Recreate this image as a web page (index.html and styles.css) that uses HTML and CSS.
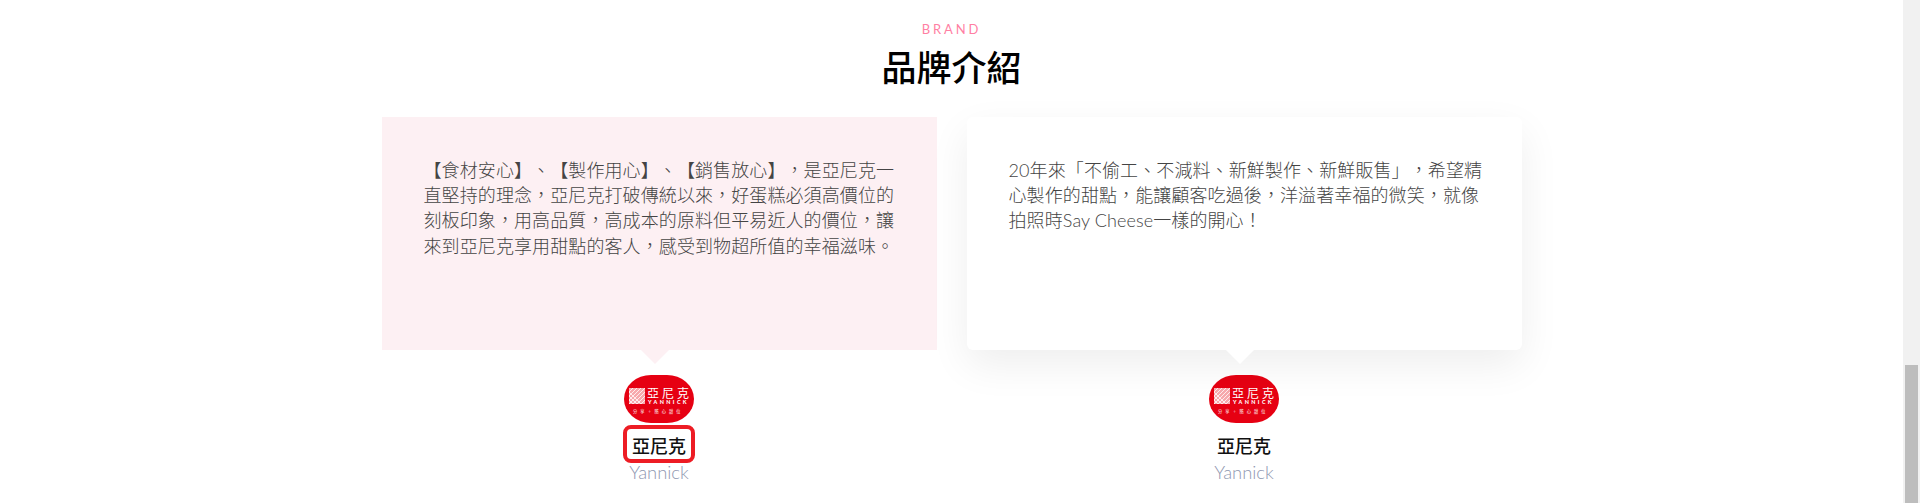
FILE: index.html
```html
<!DOCTYPE html>
<html lang="zh-Hant">
<head>
<meta charset="utf-8">
<title>品牌介紹</title>
<link rel="stylesheet" href="styles.css">
</head>
<body>
<div class="page">
  <main class="brand">
    <header class="brand-head">
      <p class="brand-eyebrow">BRAND</p>
      <h2 class="brand-title">品牌介紹</h2>
    </header>
    <div class="brand-grid">
      <article class="quote">
        <div class="bubble bubble-pink">
          <p class="bubble-text">【食材安心】、【製作用心】、【銷售放心】，是亞尼克一直堅持的理念，亞尼克打破傳統以來，好蛋糕必須高價位的刻板印象，用高品質，高成本的原料但平易近人的價位，讓來到亞尼克享用甜點的客人，感受到物超所值的幸福滋味。</p>
        </div>
        <svg class="logo" viewBox="0 0 70 48" aria-label="亞尼克">
          <rect class="logo-bg" width="70" height="48" rx="27" ry="24"/>
          <rect class="logo-square" x="5" y="13" width="16" height="16"/>
          <path class="logo-hatch" d="M5 17l4-4M5 21l8-8M5 25l12-12M5 29l16-16M9 29l12-12M13 29l8-8M17 29l4-4M5 25l4 4M5 21l8 8M5 17l12 12"/>
          <text class="logo-cn" x="23" y="22.5">亞尼克</text>
          <text class="logo-en" x="24" y="29.4">YANNICK</text>
          <text class="logo-tag" x="9" y="38">分享。隨心甜位</text>
        </svg>
        <div class="person person-marked">
          <div class="person-name">亞尼克</div>
          <div class="person-sub">Yannick</div>
        </div>
      </article>
      <article class="quote">
        <div class="bubble bubble-white">
          <p class="bubble-text">20年來「不偷工、不減料、新鮮製作、新鮮販售」，希望精心製作的甜點，能讓顧客吃過後，洋溢著幸福的微笑，就像拍照時Say Cheese一樣的開心！</p>
        </div>
        <svg class="logo" viewBox="0 0 70 48" aria-label="亞尼克">
          <rect class="logo-bg" width="70" height="48" rx="27" ry="24"/>
          <rect class="logo-square" x="5" y="13" width="16" height="16"/>
          <path class="logo-hatch" d="M5 17l4-4M5 21l8-8M5 25l12-12M5 29l16-16M9 29l12-12M13 29l8-8M17 29l4-4M5 25l4 4M5 21l8 8M5 17l12 12"/>
          <text class="logo-cn" x="23" y="22.5">亞尼克</text>
          <text class="logo-en" x="24" y="29.4">YANNICK</text>
          <text class="logo-tag" x="9" y="38">分享。隨心甜位</text>
        </svg>
        <div class="person">
          <div class="person-name">亞尼克</div>
          <div class="person-sub">Yannick</div>
        </div>
      </article>
    </div>
  </main>
  <aside class="scrollbar"><div class="scrollbar-thumb"></div></aside>
</div>
</body>
</html>
```
FILE: styles.css
```css
* { box-sizing: border-box; }
html, body { margin: 0; height: 503px; overflow: hidden; background: #fff; }
body { font-family: Lato, "Noto Sans CJK TC", sans-serif; text-spacing-trim: space-all; }
.page { display: flex; height: 503px; }
.brand { flex: 1; min-width: 0; padding-top: 20px; overflow: hidden; }
.brand-head { text-align: center; }
.brand-eyebrow {
  margin: 0;
  font-size: 13px;
  line-height: 18px;
  letter-spacing: 2.9px;
  color: #ff7fa3;
}
.brand-title {
  margin: 5px 0 0;
  font-size: 35px;
  line-height: 48px;
  font-weight: 500;
  color: #000;
}
.brand-grid {
  width: 1140px;
  margin: 26px auto 0;
  display: grid;
  grid-template-columns: 555px 555px;
  column-gap: 30px;
}
.quote { display: flex; flex-direction: column; align-items: center; }
.bubble {
  position: relative;
  width: 100%;
  height: 233px;
  padding: 41px 26px 0 42px;
}
.bubble::after {
  content: "";
  position: absolute;
  left: 259px;
  top: 100%;
  border-style: solid;
  border-width: 14px 14px 0;
  border-color: transparent;
}
.bubble-pink { background: #fdf0f3; }
.bubble-pink::after { border-top-color: #fdf0f3; }
.bubble-white {
  background: #fff;
  border-radius: 6px;
  box-shadow: 0 15px 40px rgba(0, 0, 0, .07);
}
.bubble-white::after { border-top-color: #fff; }
.bubble-text {
  margin: 0;
  font-size: 18px;
  line-height: 25.2px;
  letter-spacing: .1px;
  font-weight: 300;
  color: #444;
  text-align: left;
}
.logo { display: block; width: 70px; height: 48px; margin-top: 25px; }
.logo-bg { fill: #e60012; }
.logo-square { fill: #f7a9ad; }
.logo-hatch { stroke: #fff; stroke-width: .8; fill: none; }
.logo-cn { fill: #fff; font-size: 12px; letter-spacing: 3px; font-weight: 400; font-family: "Noto Sans CJK TC", sans-serif; }
.logo-en { fill: #fff; font-size: 5.4px; font-weight: 900; letter-spacing: 2.4px; font-family: Lato, sans-serif; }
.logo-tag { fill: #fff; font-size: 4.2px; letter-spacing: 3px; font-family: "Noto Sans CJK TC", sans-serif; }
.person { width: 72px; margin-top: 2px; text-align: center; }
.person-name {
  height: 38px;
  padding-top: 8px;
  font-size: 18px;
  line-height: 26px;
  font-weight: 500;
  color: #111;
}
.person-marked .person-name {
  border: 4px solid #ed1c24;
  border-radius: 8px;
  padding-top: 4px;
}
.person-sub {
  margin-top: -2px;
  font-size: 18.4px;
  line-height: 22px;
  font-weight: 300;
  color: #8f97b0;
  white-space: nowrap;
}
.scrollbar {
  flex: 0 0 17px;
  background: #f1f1f1;
  padding: 365px 2px 0;
}
.scrollbar-thumb { height: 138px; background: #bdbdbd; }
```
